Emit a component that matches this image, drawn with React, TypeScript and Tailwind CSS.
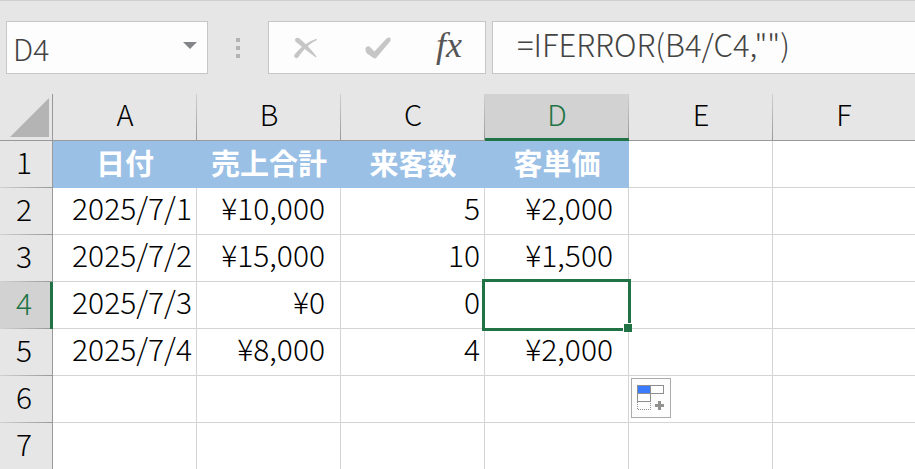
import React, { useState } from "react";
import clsx from "clsx";

const columns = ["A", "B", "C", "D", "E", "F"];

const headings = ["日付", "売上合計", "来客数", "客単価"];

const rows = [
  ["2025/7/1", "¥10,000", "5", "¥2,000"],
  ["2025/7/2", "¥15,000", "10", "¥1,500"],
  ["2025/7/3", "¥0", "0", ""],
  ["2025/7/4", "¥8,000", "4", "¥2,000"],
  [],
  [],
];

const selected = { column: "D", row: 4 };

function CancelIcon() {
  return (
    <svg width="24" height="22" viewBox="0 0 24 22" fill="#c6c6c6" aria-hidden="true">
      <path d="M1 2.500C2 .5 4 .2 5.500 1.500C11 6 17 12 22.500 19.500L22 20.500C16 16 8 10 1.500 4.500Z" />
      <path d="M22.500 1.800L23 3C15 7 9 13 4.500 20C3.500 21.500 1.500 21.500 .5 20C0 19 .2 18 1 17C7 10 14 4.500 22.500 1.800Z" />
    </svg>
  );
}

function EnterIcon() {
  return (
    <svg width="26" height="22" viewBox="0 0 26 22" fill="#c6c6c6" aria-hidden="true">
      <path d="M.5 12.500C0 10.500 2.500 8.500 4.500 9.500L9.500 14.500L21.500 1.500C23 0 25.500 0 25.500 1.500V4L11.500 20.500Q10 22 8.500 21L2 16.500Q.5 15 .5 12.500Z" />
    </svg>
  );
}

function AutoFillIcon() {
  return (
    <svg width="28" height="26" viewBox="0 0 28 26" aria-hidden="true">
      <rect x=".5" y=".5" width="13" height="8" fill="#3b7cff" stroke="#8e8e8e" />
      <rect x="13.5" y=".5" width="13" height="8" fill="#fff" stroke="#8e8e8e" />
      <rect x=".5" y="8.5" width="13" height="8" fill="#fff" stroke="#8e8e8e" />
      <path d="M.5 17V24.500H13.500V17" fill="none" stroke="#8e8e8e" strokeDasharray="1 1" />
      <path d="M21 16h3v3h3v3h-3v3h-3v-3h-3v-3h3z" fill="#929290" />
    </svg>
  );
}

function FormulaBar() {
  const [name, setName] = useState("D4");
  const [formula, setFormula] = useState('=IFERROR(B4/C4,"")');

  return (
    <header className="flex items-stretch border-t border-[#cfcfcf] bg-[#e6e6e6] py-5 pl-1.5 text-[#444]">
      <div className="flex w-[202px] shrink-0 border border-[#c6c6c6] bg-[#fdfdfd]">
        <input
          aria-label="Name box"
          className="min-w-0 flex-1 bg-transparent pt-0.5 pl-1.5 text-[30px] leading-[49px] outline-none"
          value={name}
          onChange={(e) => setName(e.target.value)}
        />
        <button type="button" aria-label="Show names" className="px-2.5 pb-1">
          <svg width="14" height="7" viewBox="0 0 14 7" aria-hidden="true">
            <path d="M0 0h14L7 7z" fill="#838588" />
          </svg>
        </button>
      </div>

      <div className="flex w-[60px] shrink-0 flex-col items-center justify-center gap-1">
        <span className="size-1 bg-[#b3b3b3]" />
        <span className="size-1 bg-[#b3b3b3]" />
        <span className="size-1 bg-[#b3b3b3]" />
      </div>

      <div className="grid w-[218px] shrink-0 grid-cols-3 border border-[#c6c6c6] bg-[#fdfdfd]">
        <button type="button" aria-label="Cancel" className="grid place-items-center pl-0.5">
          <CancelIcon />
        </button>
        <button type="button" aria-label="Enter" className="grid place-items-center pl-0.5">
          <EnterIcon />
        </button>
        <button
          type="button"
          aria-label="Insert function"
          className="pb-1 font-['Liberation_Serif',serif] text-[36px] leading-[47px] font-normal text-[#555] italic"
        >
          fx
        </button>
      </div>

      <input
        aria-label="Formula"
        className="ml-1.5 min-w-0 flex-1 border border-r-0 border-[#c6c6c6] bg-[#fdfdfd] pb-2 pl-6 text-[31px] leading-[43px] outline-none"
        value={formula}
        onChange={(e) => setFormula(e.target.value)}
      />
    </header>
  );
}

function ColumnHeader({ label }: { label: string }) {
  const active = label === selected.column;
  return (
    <th
      scope="col"
      className={clsx(
        "h-[47px] bg-[linear-gradient(to_bottom,#d0d0d0,#999)] bg-[length:1px_100%] bg-right bg-no-repeat p-0 text-[29px] font-light last:bg-none",
        active
          ? "border-b-3 border-[#217346] bg-[#d2d2d2] pb-1.5 text-[#217346]"
          : "border-b border-[#999] bg-[#e6e6e6] pb-2",
      )}
    >
      {label}
    </th>
  );
}

function RowHeader({ row }: { row: number }) {
  const active = row === selected.row;
  return (
    <th
      scope="row"
      className={clsx(
        "h-[47px] bg-[linear-gradient(to_right,#d0d0d0,#999)] bg-[length:100%_1px] bg-bottom bg-no-repeat p-0 pb-2 font-light",
        active
          ? "border-r-3 border-[#217346] bg-[#d2d2d2] pr-0.5 text-[#217346]"
          : "border-r border-[#999] bg-[#e6e6e6] pr-1",
      )}
    >
      {row}
    </th>
  );
}

function Cell({ column, row, value }: { column: string; row: number; value?: string }) {
  const isSelected = column === selected.column && row === selected.row;
  const isMoney = column === "B" || column === "D";
  return (
    <td
      className={clsx(
        "relative border-r border-b border-[#d4d4d4] p-0 pb-2 text-right whitespace-nowrap last:border-r-0",
        isMoney ? "pr-[15px]" : "pr-1",
      )}
    >
      {value}
      {isSelected && (
        <>
          <span className="pointer-events-none absolute -inset-[3px] z-10 border-3 border-[#217346]" />
          <span className="absolute -right-1 -bottom-1 z-10 size-[9px] border-t border-l border-white bg-[#217346]" />
        </>
      )}
      {/* Auto fill options sit just below the filled range */}
      {column === "E" && row === 6 && (
        <button
          type="button"
          aria-label="Auto fill options"
          className="absolute top-0.5 left-0.5 z-10 grid size-10 place-items-center border border-[#ababab] bg-[#fdfdfd]"
        >
          <AutoFillIcon />
        </button>
      )}
    </td>
  );
}

export default function App() {
  return (
    <div className="min-h-screen overflow-hidden bg-white font-['Noto_Sans_CJK_JP',sans-serif] font-light text-black">
      <FormulaBar />
      <table className="w-full table-fixed border-separate border-spacing-0 text-[30px] leading-[36px]">
        <colgroup>
          <col className="w-[53px]" />
          <col className="w-36" />
          <col className="w-36" />
          <col className="w-36" />
          <col className="w-36" />
          <col className="w-36" />
          <col />
        </colgroup>
        <thead>
          <tr>
            <td className="border-r border-b border-[#999] bg-[#e6e6e6] p-0">
              <svg className="mr-[3px] ml-auto" width="39" height="39" viewBox="0 0 39 39" aria-hidden="true">
                <path d="M39 0V39H0z" fill="#b4b4b4" />
              </svg>
            </td>
            {columns.map((label) => (
              <ColumnHeader key={label} label={label} />
            ))}
          </tr>
        </thead>
        <tbody>
          <tr>
            <RowHeader row={1} />
            {headings.map((heading) => (
              <td key={heading} className="bg-[#9bc0e6] p-0 pb-1.5 text-center text-[29px] font-bold text-white">
                {heading}
              </td>
            ))}
            <Cell column="E" row={1} />
            <Cell column="F" row={1} />
          </tr>
          {rows.map((values, i) => (
            <tr key={i}>
              <RowHeader row={i + 2} />
              {columns.map((column, c) => (
                <Cell key={column} column={column} row={i + 2} value={values[c]} />
              ))}
            </tr>
          ))}
        </tbody>
      </table>
    </div>
  );
}
